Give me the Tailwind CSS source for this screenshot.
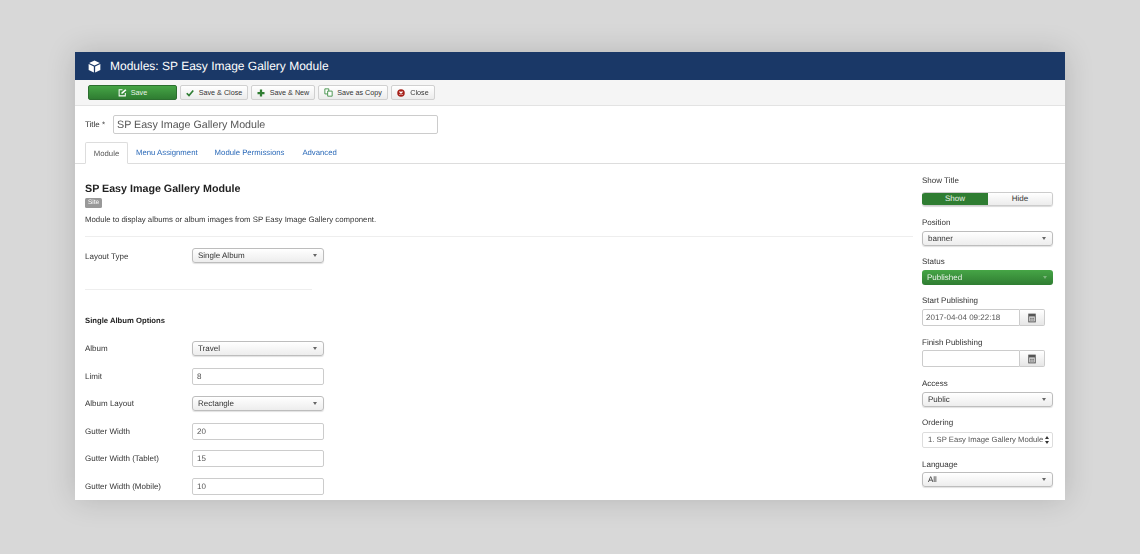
<!DOCTYPE html>
<html lang="en">
<head>
    <meta charset="UTF-8">
    <title>Modules: SP Easy Image Gallery Module</title>
    <script src="https://cdn.jsdelivr.net/npm/@tailwindcss/browser@4"></script>
</head>
<body class="bg-[#d8d8d8] h-[554px] overflow-hidden antialiased font-['Liberation_Sans',Arial,sans-serif] [text-rendering:geometricPrecision]">
    <div class="mt-[52px] ml-[75px] w-[990px] h-[448px] bg-white overflow-hidden shadow-[0_0_28px_rgba(0,0,0,0.16)]">
        <div class="blur-[0.45px]">
            <!-- Header -->
            <div class="h-[28px] bg-[#1a3867] flex items-center pl-[13px] text-white">
                <svg class="w-[13px] h-[13px]" viewBox="0 0 16 16" fill="#fff">
                    <path d="M8 .5 14.6 3.6 8 6.7 1.4 3.6Z"/>
                    <path d="M.8 5 7.2 8v7.4L.8 12.2Z"/>
                    <path d="M15.2 5 8.8 8v7.4l6.4-3.2Z"/>
                </svg>
                <h1 class="ml-[9px] text-[12px] leading-none">Modules: SP Easy Image Gallery Module</h1>
            </div>

            <!-- Toolbar -->
            <div class="h-[26px] bg-[#f5f5f5] border-b border-[#e3e3e3] flex items-center pl-[13px] text-[7.2px] text-[#333]">
                <button class="w-[89px] h-[15px] rounded-[2px] bg-gradient-to-b from-[#46a546] to-[#2f7d32] border border-[#2c6e2f] text-white/90 flex items-center justify-center gap-[4px]">
                    <svg class="w-[9px] h-[9px]" viewBox="0 0 16 16" fill="none" stroke="#fff" stroke-width="1.8"><path d="M13 9v5H2V3h6"/><path d="M6 10V8l7-6 2 2-7 6Z" fill="#fff" stroke="none"/></svg>
                    <span class="pt-[1px]">Save</span>
                </button>
                <button class="ml-[3px] w-[68px] h-[15px] rounded-[2px] bg-gradient-to-b from-white to-[#ececec] border border-[#d0d0d0] flex items-center justify-center gap-[5px]">
                    <svg class="w-[8px] h-[8px]" viewBox="0 0 16 16" fill="none" stroke="#2f7d32" stroke-width="3.4"><path d="M1.5 8.5 6 13l8.5-10"/></svg>
                    <span class="pt-[1px]">Save &amp; Close</span>
                </button>
                <button class="ml-[3px] w-[64px] h-[15px] rounded-[2px] bg-gradient-to-b from-white to-[#ececec] border border-[#d0d0d0] flex items-center justify-center gap-[5px]">
                    <svg class="w-[8px] h-[8px]" viewBox="0 0 16 16" fill="none" stroke="#2f7d32" stroke-width="4.5"><path d="M8 1v14M1 8h14"/></svg>
                    <span class="pt-[1px]">Save &amp; New</span>
                </button>
                <button class="ml-[3px] w-[70px] h-[15px] rounded-[2px] bg-gradient-to-b from-white to-[#ececec] border border-[#d0d0d0] flex items-center justify-center gap-[4px]">
                    <svg class="w-[9px] h-[9px]" viewBox="0 0 16 16" fill="#fff" stroke="#3f8f46" stroke-width="1.6"><path d="M1.5 1.5h7v9h-7Z"/><path d="M6.5 5.5h8v9h-8Z"/></svg>
                    <span class="pt-[1px]">Save as Copy</span>
                </button>
                <button class="ml-[3px] w-[44px] h-[15px] rounded-[2px] bg-gradient-to-b from-white to-[#ececec] border border-[#d0d0d0] flex items-center justify-center gap-[5px]">
                    <svg class="w-[8px] h-[8px]" viewBox="0 0 16 16"><circle cx="8" cy="8" r="7.5" fill="#a51f18"/><path d="M5 5l6 6M11 5l-6 6" stroke="#fff" stroke-width="2.4"/></svg>
                    <span class="pt-[1px]">Close</span>
                </button>
            </div>

            <!-- Title -->
            <div class="flex items-center h-[36px] pl-[10px] pt-[1px]">
                <label class="w-[28px] text-[8px] text-[#333]">Title *</label>
                <div class="w-[325px] h-[19px] border border-[#ccc] rounded-[2px] flex items-center px-[3px] pt-[2px] text-[10.7px] text-[#555]">SP Easy Image Gallery Module</div>
            </div>

            <!-- Tabs -->
            <div class="h-[22px] border-b border-[#ddd] pl-[10px] flex text-[7.75px] text-[#2a69b8]">
                <div class="w-[43px] h-[22px] bg-white border border-[#ddd] border-b-white rounded-t-[2px] flex items-center justify-center pt-[1px] text-[#555]">Module</div>
                <div class="ml-[8px] pt-[1px] flex items-center">Menu Assignment</div>
                <div class="ml-[17px] pt-[1px] flex items-center">Module Permissions</div>
                <div class="ml-[18px] pt-[1px] flex items-center">Advanced</div>
            </div>

            <div class="flex">
                <!-- Main form -->
                <div class="w-[838px] pl-[10px] pt-[17px]">
                    <h2 class="text-[10.7px] leading-[14px] font-bold text-[#222] mt-[1px]">SP Easy Image Gallery Module</h2>
                    <span class="block mt-[2px] w-[17px] h-[10px] rounded-[1.5px] bg-[#999] text-white text-[6.5px] leading-[10px] text-center">Site</span>
                    <p class="mt-[6px] text-[7.8px] leading-[11px] text-[#333]">Module to display albums or album images from SP Easy Image Gallery component.</p>
                    <hr class="mt-[11px] border-[#eee]">

                    <div class="mt-[11px] flex items-center h-[15px] text-[8px] text-[#333]">
                        <label class="w-[107px] pt-[2px]">Layout Type</label>
                        <div class="w-[132px] h-[15px] rounded-[3px] border border-[#bdbdbd] shadow-[0_1px_1px_rgba(0,0,0,0.12)] bg-gradient-to-b from-white to-[#ededed] flex items-center justify-between pl-[5px] pr-[6px]">Single Album<svg class="w-[4px] h-[3px]" viewBox="0 0 4 3"><path d="M0 0h4L2 3Z" fill="#666"/></svg></div>
                    </div>

                    <hr class="mt-[26px] w-[227px] border-[#eee]">
                    <h3 class="mt-[26px] text-[7.7px] leading-[10px] font-bold text-[#222]">Single Album Options</h3>

                    <div class="mt-[15px] flex flex-col text-[8px] text-[#333]">
                        <div class="flex items-center h-[15px]">
                            <label class="w-[107px]">Album</label>
                            <div class="w-[132px] h-[15px] rounded-[3px] border border-[#bdbdbd] shadow-[0_1px_1px_rgba(0,0,0,0.12)] bg-gradient-to-b from-white to-[#ededed] flex items-center justify-between pl-[5px] pr-[6px]">Travel<svg class="w-[4px] h-[3px]" viewBox="0 0 4 3"><path d="M0 0h4L2 3Z" fill="#666"/></svg></div>
                        </div>
                        <div class="flex items-center h-[17px] mt-[12px]">
                            <label class="w-[107px]">Limit</label>
                            <div class="w-[132px] h-[17px] rounded-[2px] border border-[#ccc] flex items-center px-[4px] text-[#555]">8</div>
                        </div>
                        <div class="flex items-center h-[15px] mt-[11px]">
                            <label class="w-[107px]">Album Layout</label>
                            <div class="w-[132px] h-[15px] rounded-[3px] border border-[#bdbdbd] shadow-[0_1px_1px_rgba(0,0,0,0.12)] bg-gradient-to-b from-white to-[#ededed] flex items-center justify-between pl-[5px] pr-[6px]">Rectangle<svg class="w-[4px] h-[3px]" viewBox="0 0 4 3"><path d="M0 0h4L2 3Z" fill="#666"/></svg></div>
                        </div>
                        <div class="flex items-center h-[17px] mt-[12px]">
                            <label class="w-[107px]">Gutter Width</label>
                            <div class="w-[132px] h-[17px] rounded-[2px] border border-[#ccc] flex items-center px-[4px] text-[#555]">20</div>
                        </div>
                        <div class="flex items-center h-[17px] mt-[10px]">
                            <label class="w-[107px]">Gutter Width (Tablet)</label>
                            <div class="w-[132px] h-[17px] rounded-[2px] border border-[#ccc] flex items-center px-[4px] text-[#555]">15</div>
                        </div>
                        <div class="flex items-center h-[17px] mt-[11px]">
                            <label class="w-[107px]">Gutter Width (Mobile)</label>
                            <div class="w-[132px] h-[17px] rounded-[2px] border border-[#ccc] flex items-center px-[4px] text-[#555]">10</div>
                        </div>
                    </div>
                </div>

                <!-- Sidebar -->
                <div class="ml-[9px] w-[131px] pt-[12px] text-[8px] text-[#333]">
                    <label class="block leading-[10px]">Show Title</label>
                    <div class="mt-[6px] h-[14px] flex rounded-[3px] overflow-hidden border border-[#ccc] border-l-0 shadow-[0_1px_1px_rgba(0,0,0,0.15)]">
                        <div class="w-[66px] bg-[#2f7d32] text-white/90 flex items-center justify-center">Show</div>
                        <div class="flex-1 bg-gradient-to-b from-white to-[#ececec] flex items-center justify-center">Hide</div>
                    </div>

                    <label class="block mt-[12px] leading-[10px]">Position</label>
                    <div class="mt-[3px] h-[15px] rounded-[3px] border border-[#bdbdbd] shadow-[0_1px_1px_rgba(0,0,0,0.12)] bg-gradient-to-b from-white to-[#ededed] flex items-center justify-between pl-[5px] pr-[6px]">banner<svg class="w-[4px] h-[3px]" viewBox="0 0 4 3"><path d="M0 0h4L2 3Z" fill="#666"/></svg></div>

                    <label class="block mt-[11px] leading-[10px]">Status</label>
                    <div class="mt-[3px] h-[15px] rounded-[3px] bg-gradient-to-b from-[#46a546] to-[#2f7d32] text-white/90 flex items-center justify-between pl-[5px] pr-[6px]">Published<svg class="w-[4px] h-[3px]" viewBox="0 0 4 3"><path d="M0 0h4L2 3Z" fill="#ffffff55"/></svg></div>

                    <label class="block mt-[11px] leading-[10px]">Start Publishing</label>
                    <div class="mt-[3px] w-[123px] h-[17px] flex">
                        <div class="flex-1 border border-[#ccc] rounded-l-[2px] flex items-center px-[3px] text-[#555]">2017-04-04 09:22:18</div>
                        <div class="w-[25px] border border-l-0 border-[#ccc] rounded-r-[2px] bg-gradient-to-b from-white to-[#e6e6e6] flex items-center justify-center">
                            <svg class="w-[10px] h-[10px]" viewBox="0 0 16 16"><path d="M2 1h12v14H2Z" fill="#555"/><path d="M3.500 5.500h9v8h-9Z" fill="#ddd"/><path d="M5 7.500h2.500V9H5ZM8.500 7.500H11V9H8.500ZM5 10.500h2.500V12H5ZM8.500 10.500H11V12H8.500Z" fill="#555"/></svg>
                        </div>
                    </div>

                    <label class="block mt-[12px] leading-[10px]">Finish Publishing</label>
                    <div class="mt-[2px] w-[123px] h-[17px] flex">
                        <div class="flex-1 border border-[#ccc] rounded-l-[2px]"></div>
                        <div class="w-[25px] border border-l-0 border-[#ccc] rounded-r-[2px] bg-gradient-to-b from-white to-[#e6e6e6] flex items-center justify-center">
                            <svg class="w-[10px] h-[10px]" viewBox="0 0 16 16"><path d="M2 1h12v14H2Z" fill="#555"/><path d="M3.500 5.500h9v8h-9Z" fill="#ddd"/><path d="M5 7.500h2.500V9H5ZM8.500 7.500H11V9H8.500ZM5 10.500h2.500V12H5ZM8.500 10.500H11V12H8.500Z" fill="#555"/></svg>
                        </div>
                    </div>

                    <label class="block mt-[12px] leading-[10px]">Access</label>
                    <div class="mt-[3px] h-[15px] rounded-[3px] border border-[#bdbdbd] shadow-[0_1px_1px_rgba(0,0,0,0.12)] bg-gradient-to-b from-white to-[#ededed] flex items-center justify-between pl-[5px] pr-[6px]">Public<svg class="w-[4px] h-[3px]" viewBox="0 0 4 3"><path d="M0 0h4L2 3Z" fill="#666"/></svg></div>

                    <label class="block mt-[11px] leading-[10px]">Ordering</label>
                    <div class="mt-[4px] h-[16px] rounded-[2px] border border-[#ddd] flex items-center justify-between pl-[5px] pr-[3px] text-[7.7px] text-[#555] whitespace-nowrap">1. SP Easy Image Gallery Module<svg class="w-[4px] h-[8px]" viewBox="0 0 4 8"><path d="M0 3 2 0l2 3ZM0 5h4L2 8Z" fill="#333"/></svg></div>

                    <label class="block mt-[12px] leading-[10px]">Language</label>
                    <div class="mt-[2px] h-[15px] rounded-[3px] border border-[#bdbdbd] shadow-[0_1px_1px_rgba(0,0,0,0.12)] bg-gradient-to-b from-white to-[#ededed] flex items-center justify-between pl-[5px] pr-[6px]">All<svg class="w-[4px] h-[3px]" viewBox="0 0 4 3"><path d="M0 0h4L2 3Z" fill="#666"/></svg></div>
                </div>
            </div>
        </div>
    </div>
</body>
</html>
